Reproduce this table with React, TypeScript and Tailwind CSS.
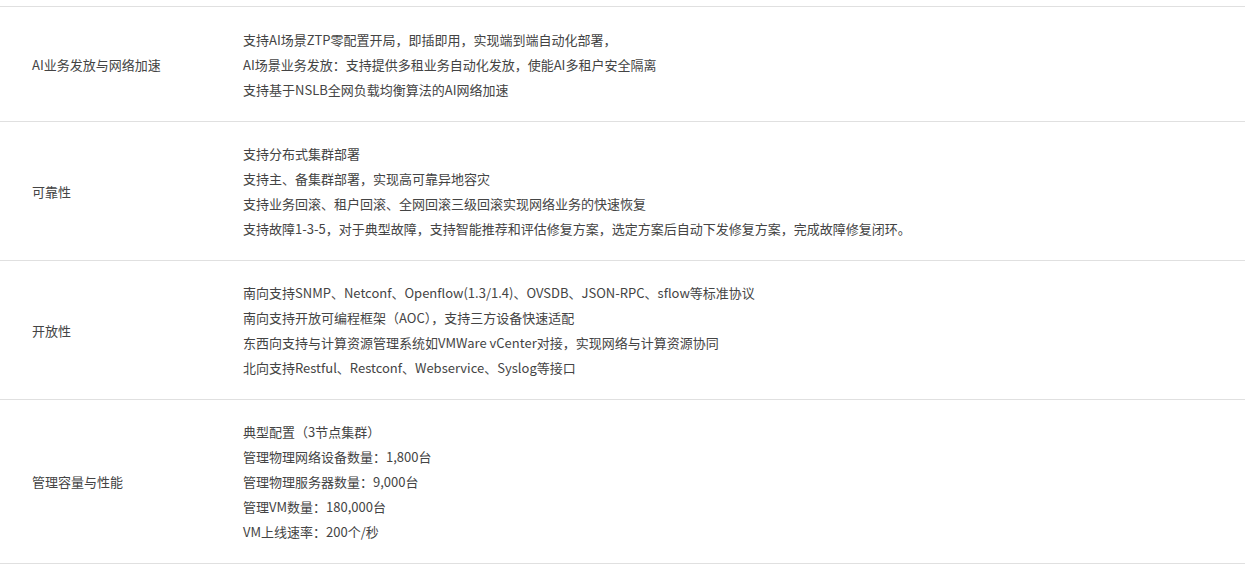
const rows: { label: string; items: string[] }[] = [
  {
    label: 'AI业务发放与网络加速',
    items: [
      '支持AI场景ZTP零配置开局，即插即用，实现端到端自动化部署，',
      'AI场景业务发放：支持提供多租业务自动化发放，使能AI多租户安全隔离',
      '支持基于NSLB全网负载均衡算法的AI网络加速',
    ],
  },
  {
    label: '可靠性',
    items: [
      '支持分布式集群部署',
      '支持主、备集群部署，实现高可靠异地容灾',
      '支持业务回滚、租户回滚、全网回滚三级回滚实现网络业务的快速恢复',
      '支持故障1-3-5，对于典型故障，支持智能推荐和评估修复方案，选定方案后自动下发修复方案，完成故障修复闭环。',
    ],
  },
  {
    label: '开放性',
    items: [
      '南向支持SNMP、Netconf、Openflow(1.3/1.4)、OVSDB、JSON-RPC、sflow等标准协议',
      '南向支持开放可编程框架（AOC），支持三方设备快速适配',
      '东西向支持与计算资源管理系统如VMWare vCenter对接，实现网络与计算资源协同',
      '北向支持Restful、Restconf、Webservice、Syslog等接口',
    ],
  },
  {
    label: '管理容量与性能',
    items: [
      '典型配置（3节点集群）',
      '管理物理网络设备数量：1,800台',
      '管理物理服务器数量：9,000台',
      '管理VM数量：180,000台',
      'VM上线速率：200个/秒',
    ],
  },
];

const App = () => {
  return (
    <div
      className="w-[1249px] h-[571px] bg-white pt-[6px] text-[13px] leading-[25px] text-[#444]"
      style={{ fontFamily: '"Microsoft YaHei", "Noto Sans CJK SC", sans-serif' }}
    >
      <div className="w-[1245px] border-b border-[#e0e0e0]">
        {rows.map((row) => (
          <div
            key={row.label}
            className="flex items-center border-t border-[#e0e0e0] pt-[19px] pb-[19px] first:pt-[20px]"
          >
            <div className="w-[243px] shrink-0 pl-[32px]">{row.label}</div>
            <div className="flex-1">
              {row.items.map((t) => (
                <p key={t}>{t}</p>
              ))}
            </div>
          </div>
        ))}
      </div>
    </div>
  );
};

export default App;
